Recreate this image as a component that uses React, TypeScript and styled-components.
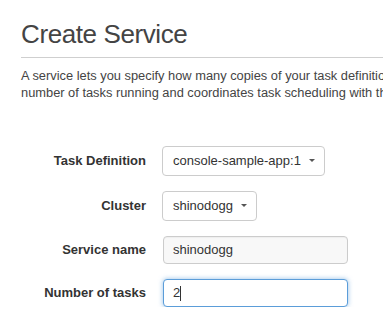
import styled, { createGlobalStyle } from 'styled-components';

const GlobalStyle = createGlobalStyle`
  html, body {
    margin: 0;
    padding: 0;
    overflow: hidden;
    background: #fff;
  }
  body {
    font-family: 'Liberation Sans', Arial, sans-serif;
    color: #333;
  }
`;

const Page = styled.div`
  padding: 20px 0 0 21px;
  width: 383px;
  box-sizing: border-box;
`;

const Header = styled.div`
  border-bottom: 1px solid #cfcfcf;
  padding-bottom: 8px;
  margin-right: -40px;
`;

const Title = styled.h1`
  margin: 0;
  font-size: 26px;
  line-height: 1.1;
  font-weight: 400;
  letter-spacing: -0.4px;
  color: #444;
`;

const Intro = styled.p`
  margin: 9px 0 0;
  font-size: 12.85px;
  line-height: 17px;
  color: #444;
  white-space: nowrap;
`;

const Form = styled.div`
  margin-top: 45px;
  display: grid;
  grid-template-columns: 125px auto;
  column-gap: 16px;
  row-gap: 15px;
  align-items: center;
`;

const Label = styled.label`
  text-align: right;
  font-size: 13px;
  font-weight: 700;
  color: #333;
`;

const Control = styled.div`
  display: flex;
  align-items: center;
  position: relative;
`;

const Select = styled.div`
  display: inline-flex;
  align-items: center;
  gap: 8px;
  height: 30px;
  padding: 0 9px 0 10px;
  box-sizing: border-box;
  border: 1px solid #ccc;
  border-radius: 4px;
  background: #fff;
  font-size: 13px;
  color: #333;
`;

const Caret = styled.span`
  width: 0;
  height: 0;
  border-left: 3px solid transparent;
  border-right: 3px solid transparent;
  border-top: 3px solid #555;
`;

const Input = styled.input<{ $focused?: boolean; $muted?: boolean }>`
  width: 185px;
  height: 28px;
  margin-left: 1px;
  padding: 0 9px;
  box-sizing: border-box;
  font-family: 'Liberation Sans', Arial, sans-serif;
  font-size: 13px;
  color: #333;
  border-radius: 4px;
  outline: none;
  border: 1px solid ${(p) => (p.$focused ? '#5b9dd9' : '#ccc')};
  background: ${(p) => (p.$muted ? '#f8f8f8' : '#fff')};
  box-shadow: ${(p) =>
    p.$focused ? '0 0 5px rgba(91, 157, 217, 0.65)' : 'inset 0 1px 1px rgba(0,0,0,0.04)'};
`;

const TextCursor = styled.span`
  position: absolute;
  left: 18px;
  top: 7px;
  width: 1px;
  height: 15px;
  background: #333;
`;

export default function App() {
  return (
    <Page>
      <GlobalStyle />
      <Header>
        <Title>Create Service</Title>
      </Header>
      <Intro>
        A service lets you specify how many copies of your task definition to run and maintain in a cluster. The service maintains the
        <br />
        number of tasks running and coordinates task scheduling with the load balancer.
      </Intro>
      <Form>
        <Label>Task Definition</Label>
        <Control>
          <Select>
            console-sample-app:1
            <Caret />
          </Select>
        </Control>

        <Label>Cluster</Label>
        <Control>
          <Select>
            shinodogg
            <Caret />
          </Select>
        </Control>

        <Label>Service name</Label>
        <Control>
          <Input $muted value="shinodogg" readOnly />
        </Control>

        <Label>Number of tasks</Label>
        <Control>
          <Input $focused value="2" readOnly />
          <TextCursor />
        </Control>
      </Form>
    </Page>
  );
}
